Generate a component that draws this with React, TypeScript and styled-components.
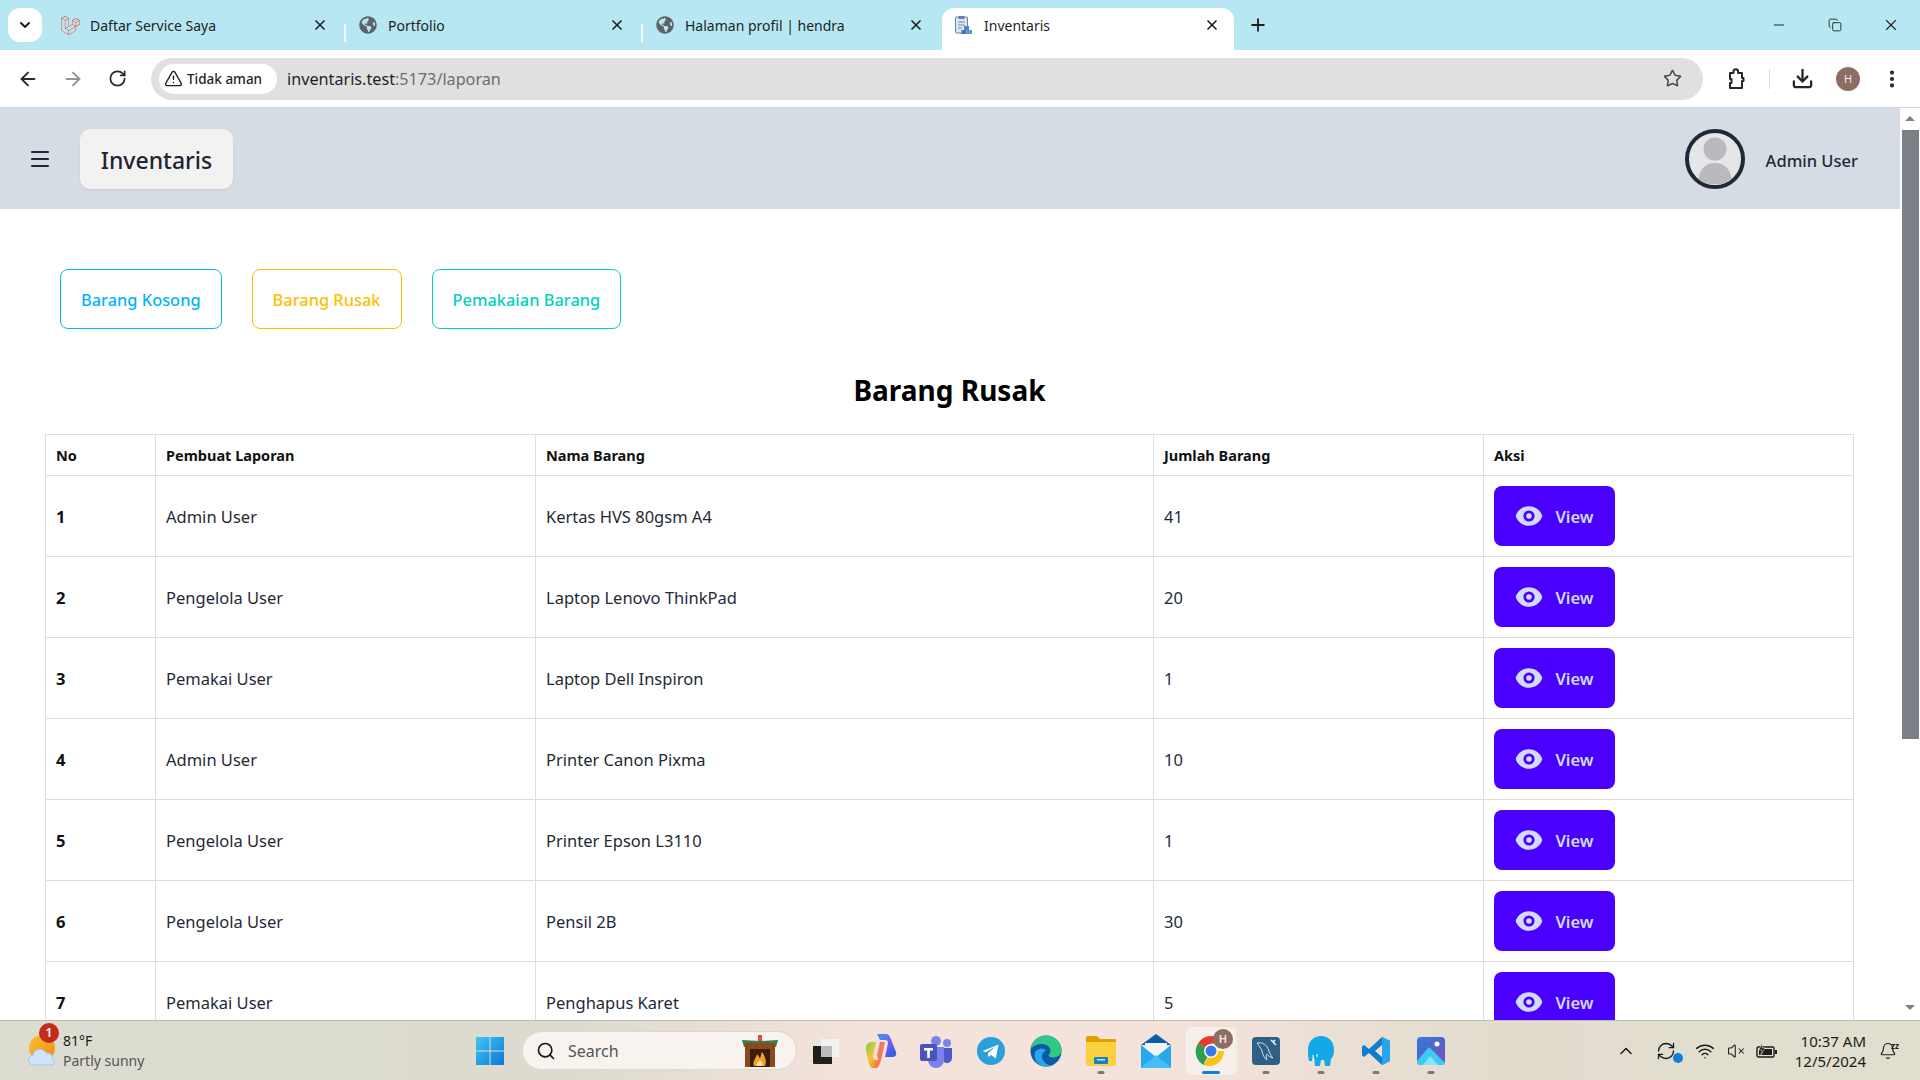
import React from 'react';
import styled, { createGlobalStyle } from 'styled-components';
import {
  ArrowLeft,
  ArrowRight,
  Bell,
  ChevronDown,
  ChevronUp,
  Copy,
  Download,
  EllipsisVertical,
  Menu,
  Minus,
  Plus,
  RefreshCw,
  RotateCw,
  Search,
  Star,
  TriangleAlert,
  VolumeX,
  Wifi,
  X,
} from 'lucide-react';
import { FaGlobeAmericas } from 'react-icons/fa';
import { HiEye } from 'react-icons/hi';
import { SiLaravel } from 'react-icons/si';

const Global = createGlobalStyle`
  html, body {
    margin: 0;
    padding: 0;
    height: 100%;
    overflow: hidden;
    background: #fff;
    font-family: 'Noto Sans', 'Open Sans', sans-serif;
  }
  * {
    box-sizing: border-box;
  }
`;

const Screen = styled.div`
  width: 1920px;
  height: 1080px;
  display: flex;
  flex-direction: column;
  overflow: hidden;
`;

/* browser chrome */
const TabStrip = styled.div`
  height: 50px;
  flex: none;
  background: #b6e7f3;
  display: flex;
  align-items: flex-end;
  padding-left: 8px;
  color: #1f1f1f;
`;

const TabSearch = styled.div`
  width: 34px;
  height: 34px;
  margin: 0 6px 8px 0;
  border-radius: 12px;
  background: #fff;
  display: flex;
  align-items: center;
  justify-content: center;
`;

const Tab = styled.div<{ $active?: boolean; $width: number }>`
  width: ${({ $width }) => $width}px;
  height: 42px;
  margin-left: ${({ $active }) => ($active ? '2px' : '0')};
  padding: 0 ${({ $active }) => ($active ? '14px' : '16px')} 8px 12px;
  display: flex;
  align-items: center;
  gap: 10px;
  font-size: 14px;
  border-radius: 12px 12px 0 0;
  background: ${({ $active }) => ($active ? '#fff' : 'transparent')};
  position: relative;
`;

const TabDivider = styled.span`
  width: 2px;
  height: 18px;
  margin-bottom: 8px;
  background: #f4fbfd;
  flex: none;
`;

const TabIcon = styled.span`
  width: 20px;
  height: 20px;
  flex: none;
  display: flex;
  align-items: center;
  justify-content: center;
  color: #5f6368;
`;

const TabTitle = styled.span`
  flex: 1;
  white-space: nowrap;
`;

const NewTab = styled.div`
  width: 48px;
  height: 42px;
  padding-bottom: 8px;
  display: flex;
  align-items: center;
  justify-content: center;
`;

const WindowControls = styled.div`
  margin-left: auto;
  height: 50px;
  display: flex;
  align-items: center;
  padding-right: 1px;
`;

const WindowButton = styled.div`
  width: 56px;
  display: flex;
  justify-content: center;
  color: #222;
`;

const Toolbar = styled.div`
  height: 58px;
  flex: none;
  background: #fff;
  border-bottom: 1px solid #d3d6da;
  border-radius: 10px 10px 0 0;
  display: flex;
  align-items: center;
  padding-left: 5px;
  color: #26282b;
`;

const NavButton = styled.div<{ $width?: number; $muted?: boolean }>`
  width: ${({ $width }) => $width ?? 45}px;
  flex: none;
  display: flex;
  align-items: center;
  justify-content: center;
  color: ${({ $muted }) => ($muted ? '#8f9499' : 'inherit')};
`;

const Omnibox = styled.div`
  width: 1552px;
  height: 42px;
  margin-left: 11px;
  border-radius: 21px;
  background: #e0e0e0;
  display: flex;
  align-items: center;
  padding: 0 21px 0 8px;
  flex: none;
`;

const SecurityChip = styled.div`
  height: 30px;
  width: 118px;
  padding-left: 5px;
  border-radius: 15px;
  background: #fff;
  display: flex;
  align-items: center;
  gap: 4px;
  font-size: 13.5px;
  font-weight: 500;
  color: #1f1f1f;
  white-space: nowrap;
`;

const Url = styled.div`
  margin-left: 10px;
  padding-top: 1px;
  flex: 1;
  font-size: 16.2px;
  color: #6b6e72;
  span {
    color: #1f1f1f;
  }
`;

const ToolbarDivider = styled.span`
  width: 1px;
  height: 20px;
  background: #b6e7f3;
  flex: none;
`;

const Avatar = styled.div`
  width: 24px;
  height: 24px;
  flex: none;
  margin: 0 4px 0 2px;
  border-radius: 50%;
  background: #8d6e63;
  color: #f1e9e6;
  font-size: 11px;
  display: flex;
  align-items: center;
  justify-content: center;
`;

/* viewport */
const Viewport = styled.div`
  flex: 1;
  min-height: 0;
  display: flex;
  overflow: hidden;
`;

const Page = styled.div`
  flex: 1;
  min-width: 0;
  background: #fff;
`;

const Navbar = styled.header`
  height: 101px;
  background: #d6dce4;
  display: flex;
  align-items: center;
  padding: 0 42px 0 28px;
  color: #1f2937;
`;

const Brand = styled.div`
  margin-left: 28px;
  width: 153px;
  height: 60px;
  padding-top: 2px;
  border-radius: 10px;
  background: #f2f2f2;
  box-shadow: 0 1px 2px rgba(0, 0, 0, 0.08);
  display: flex;
  align-items: center;
  justify-content: center;
  font-size: 23px;
  font-weight: 500;
  color: #1f2430;
`;

const UserBox = styled.div`
  margin-left: auto;
  display: flex;
  align-items: center;
  gap: 21px;
`;

const UserPhoto = styled.div`
  width: 60px;
  height: 60px;
  border-radius: 50%;
  border: 4px solid #1f2937;
  overflow: hidden;
  background: #e5e6e7;
  padding: 1px;
`;

const UserName = styled.span`
  padding-top: 3px;
  font-size: 16.5px;
  font-weight: 500;
  color: #1f2937;
`;

const Main = styled.main`
  padding: 60px 46px 0 45px;
`;

const ReportNav = styled.nav`
  display: flex;
  gap: 30px;
  margin-left: 15px;
`;

const ReportLink = styled.a<{ $color: string }>`
  height: 60px;
  padding: 0 20px;
  display: flex;
  align-items: center;
  border: 1px solid ${({ $color }) => $color};
  border-radius: 8px;
  font-size: 16.4px;
  font-weight: 500;
  color: ${({ $color }) => $color};
`;

const Heading = styled.h1`
  margin: 40px 0 23px;
  height: 42px;
  line-height: 42px;
  text-align: center;
  font-size: 28px;
  font-weight: 700;
  color: #000;
`;

const Table = styled.table`
  width: 100%;
  table-layout: fixed;
  border-collapse: collapse;
  color: #1f2937;
`;

const Th = styled.th<{ $width?: number }>`
  width: ${({ $width }) => ($width ? `${$width}px` : 'auto')};
  height: 41px;
  padding: 0 10px;
  border: 1px solid #dedede;
  text-align: left;
  font-size: 14.5px;
  font-weight: 700;
  color: #111;
`;

const Td = styled.td<{ $bold?: boolean }>`
  height: 81px;
  padding: 0 10px;
  border: 1px solid #dedede;
  font-size: 16.5px;
  font-weight: ${({ $bold }) => ($bold ? 700 : 400)};
  color: ${({ $bold }) => ($bold ? '#111' : '#1f2937')};
`;

const ViewButton = styled.button`
  width: 121px;
  height: 60px;
  border: none;
  border-radius: 8px;
  background: #4a00ff;
  color: #d1dbff;
  font-family: inherit;
  font-size: 16.5px;
  font-weight: 600;
  display: flex;
  align-items: center;
  justify-content: center;
  gap: 12px;
`;

const Scrollbar = styled.aside`
  width: 20px;
  flex: none;
  background: #fff;
  display: flex;
  flex-direction: column;
  align-items: center;
  padding-top: 8px;
`;

const ScrollArrow = styled.span<{ $down?: boolean }>`
  width: 0;
  height: 0;
  flex: none;
  border-left: 5px solid transparent;
  border-right: 5px solid transparent;
  ${({ $down }) =>
    $down
      ? 'border-top: 5px solid #7b8087; margin-top: 266px;'
      : 'border-bottom: 5px solid #7b8087;'}
`;

const ScrollThumb = styled.div`
  width: 17px;
  height: 609px;
  margin-top: 9px;
  background: #7b8087;
  flex: none;
`;

/* windows taskbar */
const Taskbar = styled.footer`
  height: 60px;
  flex: none;
  border-top: 1px solid #bdbcb2;
  background: linear-gradient(90deg, #dcdcd0 0%, #dddbd0 30%, #f4e3da 45%, #f3e3da 62%, #e2dccf 78%, #e0decf 100%);
  display: flex;
  align-items: center;
`;

const Weather = styled.div`
  width: 475px;
  flex: none;
  padding-left: 27px;
  display: flex;
  align-items: center;
  gap: 4px;
  position: relative;
`;

const WeatherBadge = styled.span`
  position: absolute;
  left: 39px;
  top: -8px;
  width: 20px;
  height: 20px;
  border-radius: 50%;
  background: #c42b1c;
  color: #fff;
  font-size: 12px;
  font-weight: 600;
  display: flex;
  align-items: center;
  justify-content: center;
`;

const WeatherText = styled.div`
  font-size: 14px;
  line-height: 20px;
  color: #1b1b1b;
  small {
    display: block;
    font-size: 14px;
    color: #555;
  }
`;

const SearchBox = styled.div`
  width: 275px;
  height: 39px;
  margin-left: 17px;
  padding: 0 16px 0 13px;
  border-radius: 20px;
  border: 1px solid #dcd7cf;
  background: #f8f3ee;
  display: flex;
  align-items: center;
  gap: 12px;
  font-size: 16px;
  color: #555;
  flex: none;
  span {
    flex: 1;
  }
`;

const AppSlot = styled.div<{ $open?: boolean; $active?: boolean }>`
  width: ${({ $active }) => ($active ? '49px' : '55px')};
  margin: 0 ${({ $active }) => ($active ? '3px' : '0')};
  height: 48px;
  flex: none;
  border-radius: 6px;
  position: relative;
  display: flex;
  align-items: center;
  justify-content: center;
  background: ${({ $active }) => ($active ? '#f7efe9' : 'transparent')};
  box-shadow: ${({ $active }) => ($active ? '3px 0 0 -1px #f5ece6' : 'none')};
  &::after {
    content: '';
    display: ${({ $open }) => ($open ? 'block' : 'none')};
    position: absolute;
    bottom: 1px;
    left: 50%;
    transform: translateX(-50%);
    width: ${({ $active }) => ($active ? '18px' : '7px')};
    height: 3px;
    border-radius: 2px;
    background: ${({ $active }) => ($active ? '#0f7fdc' : '#7d7872')};
  }
`;

const AppBadge = styled.span`
  position: absolute;
  top: 2px;
  right: 2px;
  width: 20px;
  height: 20px;
  border-radius: 50%;
  background: #8d6e63;
  color: #eee;
  font-size: 11px;
  font-weight: 600;
  display: flex;
  align-items: center;
  justify-content: center;
`;

const AppRow = styled.div`
  margin-left: 1px;
  display: flex;
  align-items: center;
`;

const Tray = styled.div`
  margin-left: auto;
  display: flex;
  align-items: center;
  color: #1b1b1b;
`;

const TrayIcon = styled.span<{ $width: number }>`
  width: ${({ $width }) => $width}px;
  display: flex;
  justify-content: center;
  position: relative;
`;

const TrayDot = styled.span`
  position: absolute;
  right: 5px;
  bottom: -2px;
  width: 10px;
  height: 10px;
  border-radius: 50%;
  background: #0f7fdc;
`;

const Clock = styled.div`
  width: 78px;
  margin-left: 4px;
  text-align: right;
  font-size: 15px;
  line-height: 20px;
  color: #1b1b1b;
`;

const BellSlot = styled.span`
  width: 44px;
  margin-right: 10px;
  display: flex;
  justify-content: center;
  position: relative;
  small {
    position: absolute;
    top: -2px;
    left: 25px;
    font-size: 8px;
    font-weight: 700;
  }
`;

const PuzzleIcon = () => (
  <svg width="24" height="24" viewBox="0 0 24 24" fill="none" stroke="currentColor" strokeWidth="2" strokeLinejoin="round">
    <path d="M6 6h3.500V4.500a2.300 2.300 0 0 1 4.600 0V6H18v5h1.500v3H18v7H6v-5h1.500v-4H6z" />
  </svg>
);

const InventoryFavicon = () => (
  <svg width="20" height="20" viewBox="0 0 20 20">
    <rect x="1.5" y="2" width="12" height="16" rx="1" fill="#dfe7f2" stroke="#5b83b5" />
    <rect x="4.5" y="1" width="6" height="3" fill="#5b83b5" />
    <path d="M4 7h7M4 10h7M4 13h4" stroke="#6f8aab" />
    <rect x="10" y="11" width="5" height="4" fill="#4f86c6" />
    <rect x="7.5" y="15" width="5" height="4" fill="#3f76b8" />
    <rect x="13" y="15" width="5" height="4" fill="#5b95d6" />
  </svg>
);

const PersonPhoto = () => (
  <svg width="50" height="50" viewBox="0 0 50 50">
    <circle cx="25" cy="15" r="11.5" fill="#b9babd" />
    <path d="M8 50c0-14 7-21 17-21s17 7 17 21z" fill="#b9babd" />
  </svg>
);

const WeatherIcon = () => (
  <svg width="32" height="32" viewBox="0 0 32 32">
    <defs>
      <linearGradient id="sun" x1="0" y1="0" x2="1" y2="1">
        <stop offset="0" stopColor="#fbc02d" />
        <stop offset="1" stopColor="#f28c1c" />
      </linearGradient>
    </defs>
    <circle cx="15" cy="13" r="13" fill="url(#sun)" />
    <path d="M7 30a5 5 0 0 1-1-10 7 7 0 0 1 13-2 6 6 0 0 1 7 6 4 4 0 0 1 0 6z" fill="#cfe3fb" stroke="#a5c6ee" />
  </svg>
);

const WindowsLogo = () => (
  <svg width="30" height="30" viewBox="0 0 30 30">
    <defs>
      <linearGradient id="win" x1="0" y1="0" x2="1" y2="1">
        <stop offset="0" stopColor="#3fc6f7" />
        <stop offset="1" stopColor="#0a78d4" />
      </linearGradient>
    </defs>
    <path d="M1 1h13.500v13.500H1zM15.500 1H29v13.500H15.500zM1 15.500h13.500V29H1zM15.500 15.500H29V29H15.500z" fill="url(#win)" />
  </svg>
);

const FireplaceIcon = () => (
  <svg width="40" height="32" viewBox="0 0 40 32">
    <rect x="18" y="0" width="4" height="6" fill="#d8503f" />
    <path d="M2 5c6 0 12 1 18 1s12-1 18-1l-2 7H4z" fill="#3f7a4a" />
    <rect x="5" y="8" width="30" height="24" fill="#8a4a1e" />
    <rect x="10" y="14" width="20" height="18" fill="#3a1d0d" />
    <path d="M14 31c-2-5 2-7 3-12 2 2 2 4 3 4 1-2 1-4 2-6 3 4 5 9 3 14z" fill="#f4a02c" />
    <path d="M17 31c-1-3 2-4 3-6 2 2 3 4 2 6z" fill="#fde7a0" />
  </svg>
);

const FilesIcon = () => (
  <svg width="28" height="28" viewBox="0 0 28 28">
    <rect x="9" y="2" width="18" height="18" rx="1" fill="#f2f2f2" />
    <rect x="9" y="9" width="11" height="11" fill="#bcbcbc" />
    <path d="M1 9h8v11h11v7H2a1 1 0 0 1-1-1z" fill="#1f1f1f" />
  </svg>
);

const CopilotIcon = () => (
  <svg width="32" height="36" viewBox="0 0 32 36">
    <defs>
      <linearGradient id="cpA" x1="0" y1="0" x2="1" y2="1">
        <stop offset="0" stopColor="#2f9df4" />
        <stop offset="0.5" stopColor="#7a5cf0" />
        <stop offset="1" stopColor="#1c62d6" />
      </linearGradient>
      <linearGradient id="cpB" x1="0" y1="0" x2="1" y2="1">
        <stop offset="0" stopColor="#7ad14f" />
        <stop offset="0.5" stopColor="#f7c531" />
        <stop offset="1" stopColor="#f0553d" />
      </linearGradient>
    </defs>
    <path d="M12 1h9c2 0 3 1 4 3l6 15c1 3-1 5-4 5h-7l3-14c0-2-1-3-3-3h-5z" fill="url(#cpA)" />
    <path d="M1 14c0-3 3-5 5-5h5l-3 15c0 2 2 3 4 3h3l-2 7c-1 1-2 1-3 1H8c-2 0-3-2-4-4L1 17z" fill="url(#cpB)" />
    <path d="M12 22l3-13h5l-3 14c-1 4-2 10-5 11 2-3 1-8 0-12z" fill="#f47a5c" />
  </svg>
);

const TeamsIcon = () => (
  <svg width="34" height="34" viewBox="0 0 34 34">
    <circle cx="28" cy="9" r="4" fill="#7b83eb" />
    <path d="M22 14h11v10a5 5 0 0 1-8 4z" fill="#5059c9" />
    <circle cx="17" cy="7" r="5" fill="#7b83eb" />
    <path d="M9 13h16v13a8 8 0 0 1-16 0z" fill="#7b83eb" />
    <rect x="1" y="10" width="17" height="17" rx="2" fill="#4b53bc" />
    <path d="M5 14h9v2.400h-3.200V24H8.200v-7.600H5z" fill="#fff" />
  </svg>
);

const TelegramIcon = () => (
  <svg width="28" height="28" viewBox="0 0 28 28">
    <circle cx="14" cy="14" r="14" fill="#2a9fd8" />
    <path d="M5.500 14l16-6.500-2.600 14-5-3.600-2.400 2.400-.6-4 8-7-10 6z" fill="#fff" />
  </svg>
);

const EdgeIcon = () => (
  <svg width="32" height="32" viewBox="0 0 32 32">
    <defs>
      <linearGradient id="edgeA" x1="0" y1="0" x2="1" y2="1">
        <stop offset="0" stopColor="#35c1a0" />
        <stop offset="1" stopColor="#2ad06f" />
      </linearGradient>
    </defs>
    <circle cx="16" cy="16" r="15.500" fill="#0c59a4" />
    <path d="M1 14C2 6 8 .5 16 .5c8.500 0 15.500 6.500 15.500 14 0 5-4 8-8 8-3 0-5-1-5-2 0-1 2-1.500 2-4.500 0-4-3.500-7-8-7-5 0-9.500 1.500-11.500 5z" fill="url(#edgeA)" />
    <path d="M5 17c3-4 9-5 11-1-4 1-5 5-3 9 1.500 3 5 5.500 9 5.500-2 .8-4 1-6 1C8 31.500 3 25 5 17z" fill="#2aa4ea" />
  </svg>
);

const FolderIcon = () => (
  <svg width="32" height="32" viewBox="0 0 32 32">
    <path d="M1 3a2 2 0 0 1 2-2h9l3 3h15a1 1 0 0 1 1 1v6H1z" fill="#e0a100" />
    <path d="M1 7h30v22a2 2 0 0 1-2 2H3a2 2 0 0 1-2-2z" fill="#fbd13f" />
    <rect x="9" y="22" width="14" height="7" rx="1" fill="#1a80cc" />
    <rect x="12" y="24" width="8" height="1.500" fill="#bfe2fa" />
  </svg>
);

const MailIcon = () => (
  <svg width="32" height="36" viewBox="0 0 32 36">
    <path d="M16 1L1 12h30z" fill="#0a5ea8" />
    <path d="M5 10h22v9l-11 6-11-6z" fill="#f4f4f4" />
    <path d="M1 12l15 12 15-12v23H1z" fill="#27a8ec" />
    <path d="M1 35l15-13 15 13z" fill="#48bdf5" />
  </svg>
);

const ChromeIcon = () => (
  <svg width="32" height="32" viewBox="0 0 32 32">
    <path d="M16 16L3 8.500A15 15 0 0 1 29 8.500H16z" fill="#e53b30" />
    <path d="M16 16l-6.500 11.200-.1 3A15 15 0 0 1 3 8.500z" fill="#2e9e4f" />
    <path d="M16 16h13a15 15 0 0 1-20 14.100z" fill="#f9c316" />
    <circle cx="16" cy="16" r="7" fill="#fff" />
    <circle cx="16" cy="16" r="5.500" fill="#3a7bea" />
  </svg>
);

const MysqlIcon = () => (
  <svg width="28" height="28" viewBox="0 0 28 28">
    <rect width="28" height="28" rx="4" fill="#2f5f85" />
    <path d="M5 6c6-1 10 2 12 8 1 3 2 5 4 7-3-1-5-2-6-4-1 2-1 4 0 6-3-2-4-5-5-9-1-3-3-5-5-8z" fill="none" stroke="#cfe0ec" strokeWidth="1" />
    <path d="M19 3l5 5M23 3l-2 2" stroke="#e8f0f6" strokeWidth="1.600" />
  </svg>
);

const ElephantIcon = () => (
  <svg width="30" height="32" viewBox="0 0 30 32">
    <path d="M2 15C2 6 8 1 15 1s13 5 13 14c0 4-1 7-3 9l-1 7h-5l-1-6h-3l-1 6H9l-1-9c-1 1-2 2-2 4H3c-1-4-1-7-1-11z" fill="#14a9e6" />
    <path d="M7 20c0 2 0 4 1 6M11 19v3" stroke="#e9f7fd" strokeWidth="1.200" fill="none" />
  </svg>
);

const VsCodeIcon = () => (
  <svg width="30" height="30" viewBox="0 0 30 30">
    <path d="M21 1l8 4v20l-8 4-13-12-5 4-2-1.500V10.500L3 9l5 4z" fill="#0f7fcc" />
    <path d="M21 1l8 4v20l-8 4z" fill="#29a5ee" />
    <path d="M21 9l-7 6 7 6z" fill="#e9e2d8" />
  </svg>
);

const PhotosIcon = () => (
  <svg width="28" height="28" viewBox="0 0 28 28">
    <defs>
      <linearGradient id="ph" x1="0" y1="0" x2="1" y2="1">
        <stop offset="0" stopColor="#2f7bdc" />
        <stop offset="1" stopColor="#7a4fb5" />
      </linearGradient>
    </defs>
    <rect width="28" height="28" rx="4" fill="url(#ph)" />
    <circle cx="20" cy="7" r="2.500" fill="#fff" />
    <path d="M0 24L12 10l16 16a2 2 0 0 1-2 2H3a3 3 0 0 1-3-4z" fill="#3ccbf2" />
    <path d="M6 28l7-9 8 9z" fill="#8be4fa" />
  </svg>
);

const BatteryIcon = () => (
  <svg width="22" height="16" viewBox="0 0 22 16">
    <rect x="1" y="4" width="17" height="10" rx="1.500" fill="none" stroke="#1b1b1b" strokeWidth="1.400" />
    <rect x="3" y="6" width="13" height="6" fill="#1b1b1b" />
    <rect x="19" y="7" width="2" height="4" fill="#1b1b1b" />
    <path d="M6 0L3 7h3l-1 5 4-7H6z" fill="#1b1b1b" stroke="#e0decf" strokeWidth=".6" />
  </svg>
);

const rows = [
  ['1', 'Admin User', 'Kertas HVS 80gsm A4', '41'],
  ['2', 'Pengelola User', 'Laptop Lenovo ThinkPad', '20'],
  ['3', 'Pemakai User', 'Laptop Dell Inspiron', '1'],
  ['4', 'Admin User', 'Printer Canon Pixma', '10'],
  ['5', 'Pengelola User', 'Printer Epson L3110', '1'],
  ['6', 'Pengelola User', 'Pensil 2B', '30'],
  ['7', 'Pemakai User', 'Penghapus Karet', '5'],
];

const App = function() {
  return (
    <Screen>
      <Global />
      <TabStrip>
        <TabSearch>
          <ChevronDown size={16} strokeWidth={3} />
        </TabSearch>
        <Tab $width={296}>
          <TabIcon>
            <SiLaravel size={19} color="#ef5a4c" />
          </TabIcon>
          <TabTitle>Daftar Service Saya</TabTitle>
          <X size={16} strokeWidth={2.5} />
        </Tab>
        <TabDivider />
        <Tab $width={295}>
          <TabIcon>
            <FaGlobeAmericas size={18} />
          </TabIcon>
          <TabTitle>Portfolio</TabTitle>
          <X size={16} strokeWidth={2.5} />
        </Tab>
        <TabDivider />
        <Tab $width={297}>
          <TabIcon>
            <FaGlobeAmericas size={18} />
          </TabIcon>
          <TabTitle>Halaman profil | hendra</TabTitle>
          <X size={16} strokeWidth={2.5} />
        </Tab>
        <Tab $active $width={292}>
          <TabIcon>
            <InventoryFavicon />
          </TabIcon>
          <TabTitle>Inventaris</TabTitle>
          <X size={16} strokeWidth={2.5} />
        </Tab>
        <NewTab>
          <Plus size={20} strokeWidth={2.2} />
        </NewTab>
        <WindowControls>
          <WindowButton>
            <Minus size={16} strokeWidth={1.5} />
          </WindowButton>
          <WindowButton>
            <Copy size={14} strokeWidth={1.5} />
          </WindowButton>
          <WindowButton>
            <X size={18} strokeWidth={1.5} />
          </WindowButton>
        </WindowControls>
      </TabStrip>

      <Toolbar>
        <NavButton>
          <ArrowLeft size={22} strokeWidth={2} />
        </NavButton>
        <NavButton $muted>
          <ArrowRight size={22} strokeWidth={2} />
        </NavButton>
        <NavButton>
          <RotateCw size={19} strokeWidth={2.2} />
        </NavButton>
        <Omnibox>
          <SecurityChip>
            <TriangleAlert size={19} strokeWidth={1.8} />
            Tidak aman
          </SecurityChip>
          <Url>
            <span>inventaris.test</span>:5173/laporan
          </Url>
          <Star size={19} strokeWidth={2} color="#4a4a4a" />
        </Omnibox>
        <NavButton $width={66}>
          <PuzzleIcon />
        </NavButton>
        <ToolbarDivider />
        <NavButton $width={64}>
          <Download size={23} strokeWidth={2.4} />
        </NavButton>
        <Avatar>H</Avatar>
        <NavButton $width={56}>
          <EllipsisVertical size={22} strokeWidth={2.6} />
        </NavButton>
      </Toolbar>

      <Viewport>
        <Page>
          <Navbar>
            <Menu size={24} strokeWidth={2.2} />
            <Brand>Inventaris</Brand>
            <UserBox>
              <UserPhoto>
                <PersonPhoto />
              </UserPhoto>
              <UserName>Admin User</UserName>
            </UserBox>
          </Navbar>
          <Main>
            <ReportNav>
              <ReportLink $color="#00b5ff">Barang Kosong</ReportLink>
              <ReportLink $color="#ffbe00">Barang Rusak</ReportLink>
              <ReportLink $color="#00d3bb">Pemakaian Barang</ReportLink>
            </ReportNav>
            <Heading>Barang Rusak</Heading>
            <Table>
              <thead>
                <tr>
                  <Th $width={110}>No</Th>
                  <Th $width={380}>Pembuat Laporan</Th>
                  <Th $width={618}>Nama Barang</Th>
                  <Th $width={330}>Jumlah Barang</Th>
                  <Th>Aksi</Th>
                </tr>
              </thead>
              <tbody>
                {rows.map(row => (
                  <tr key={row[0]}>
                    <Td $bold>{row[0]}</Td>
                    <Td>{row[1]}</Td>
                    <Td>{row[2]}</Td>
                    <Td>{row[3]}</Td>
                    <Td>
                      <ViewButton>
                        <HiEye size={28} />
                        View
                      </ViewButton>
                    </Td>
                  </tr>
                ))}
              </tbody>
            </Table>
          </Main>
        </Page>
        <Scrollbar>
          <ScrollArrow />
          <ScrollThumb />
          <ScrollArrow $down />
        </Scrollbar>
      </Viewport>

      <Taskbar>
        <Weather>
          <WeatherIcon />
          <WeatherBadge>1</WeatherBadge>
          <WeatherText>
            81°F
            <small>Partly sunny</small>
          </WeatherText>
        </Weather>
        <WindowsLogo />
        <SearchBox>
          <Search size={20} strokeWidth={2} color="#1b1b1b" />
          <span>Search</span>
          <FireplaceIcon />
        </SearchBox>
        <AppRow>
          <AppSlot>
            <FilesIcon />
          </AppSlot>
          <AppSlot>
            <CopilotIcon />
          </AppSlot>
          <AppSlot>
            <TeamsIcon />
          </AppSlot>
          <AppSlot>
            <TelegramIcon />
          </AppSlot>
          <AppSlot>
            <EdgeIcon />
          </AppSlot>
          <AppSlot $open>
            <FolderIcon />
          </AppSlot>
          <AppSlot>
            <MailIcon />
          </AppSlot>
          <AppSlot $open $active>
            <ChromeIcon />
            <AppBadge>H</AppBadge>
          </AppSlot>
          <AppSlot $open>
            <MysqlIcon />
          </AppSlot>
          <AppSlot $open>
            <ElephantIcon />
          </AppSlot>
          <AppSlot $open>
            <VsCodeIcon />
          </AppSlot>
          <AppSlot $open>
            <PhotosIcon />
          </AppSlot>
        </AppRow>
        <Tray>
          <TrayIcon $width={36}>
            <ChevronUp size={20} strokeWidth={1.8} />
          </TrayIcon>
          <TrayIcon $width={44}>
            <RefreshCw size={20} strokeWidth={1.6} />
            <TrayDot />
          </TrayIcon>
          <TrayIcon $width={34}>
            <Wifi size={20} strokeWidth={1.8} />
          </TrayIcon>
          <TrayIcon $width={28}>
            <VolumeX size={18} strokeWidth={1.4} />
          </TrayIcon>
          <TrayIcon $width={34}>
            <BatteryIcon />
          </TrayIcon>
          <Clock>
            10:37 AM
            <br />
            12/5/2024
          </Clock>
          <BellSlot>
            <Bell size={18} strokeWidth={1.6} />
            <small>zz</small>
          </BellSlot>
        </Tray>
      </Taskbar>
    </Screen>
  );
};

export default App;
